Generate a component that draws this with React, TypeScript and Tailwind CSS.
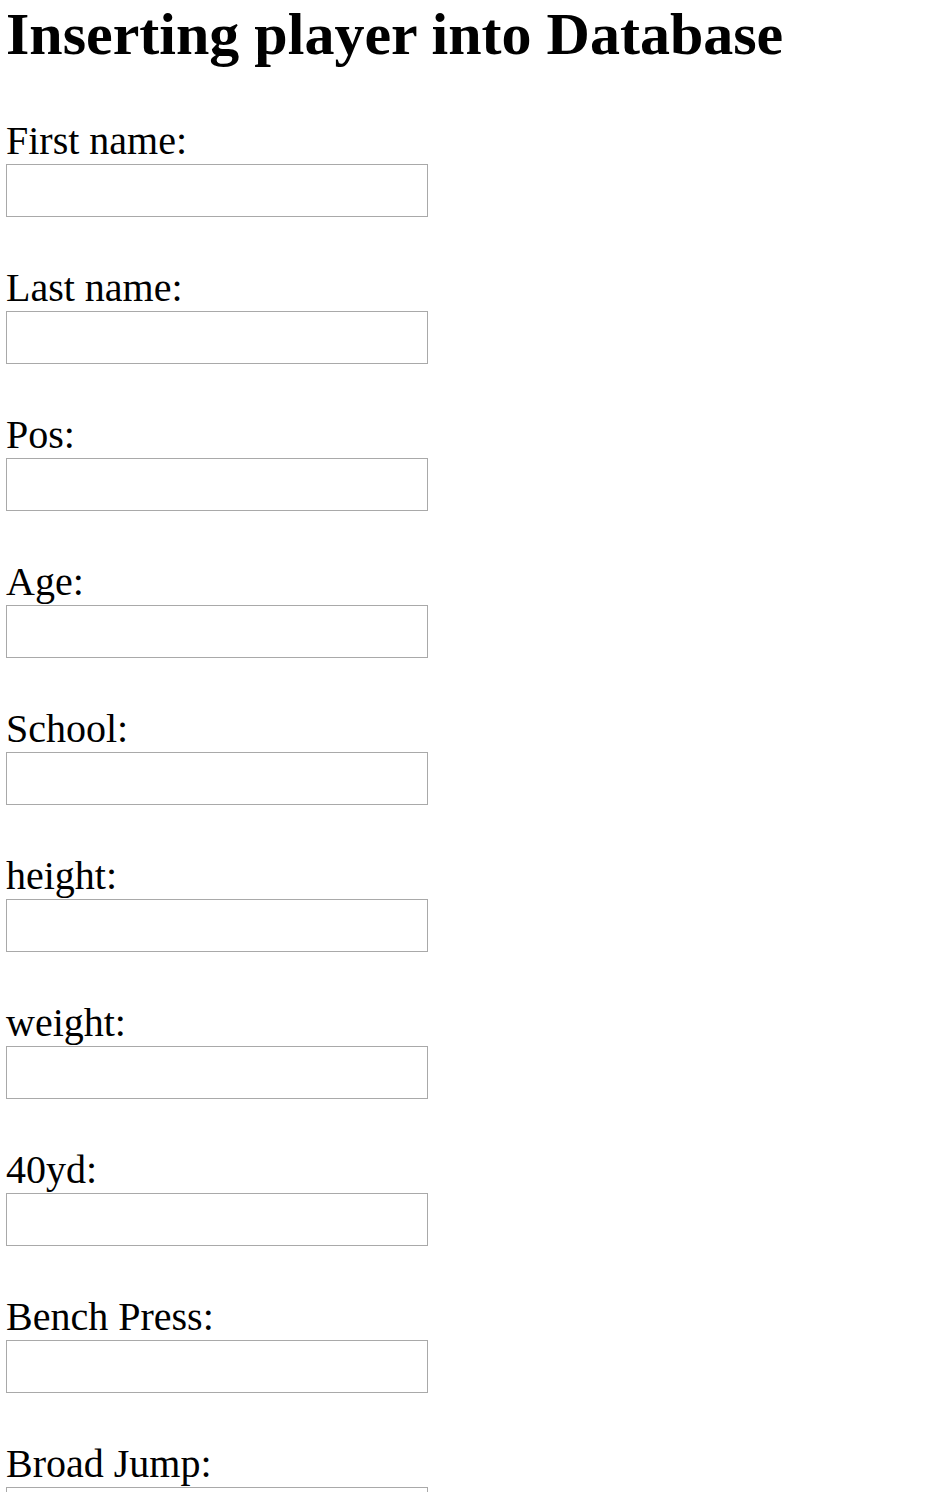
import React from "react";

const fields = [
  "First name:",
  "Last name:",
  "Pos:",
  "Age:",
  "School:",
  "height:",
  "weight:",
  "40yd:",
  "Bench Press:",
  "Broad Jump:",
];

export default function App() {
  return (
    <div
      className="bg-white text-black pl-[6px] pb-[48px]"
      style={{ fontFamily: '"Liberation Serif", "Times New Roman", serif' }}
    >
      <h1 className="text-[60px] font-bold leading-[69px] m-0">
        Inserting player into Database
      </h1>
      <div className="flex flex-col gap-[48px] mt-[49px]">
        {fields.map((f) => (
          <div key={f} className="flex flex-col">
            <label className="text-[40px] leading-[46px]">{f}</label>
            <input
              type="text"
              className="w-[422px] h-[53px] border border-[#a9a9a9] bg-white outline-none"
            />
          </div>
        ))}
      </div>
    </div>
  );
}
